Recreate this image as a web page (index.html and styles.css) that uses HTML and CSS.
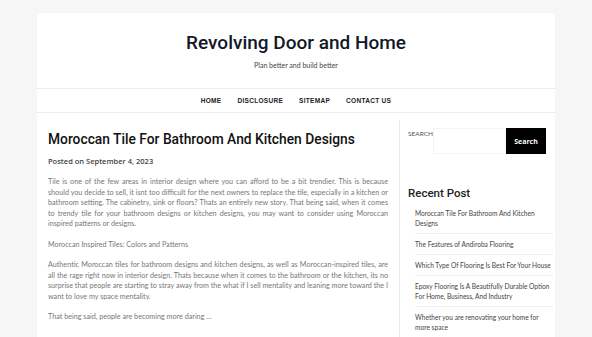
FILE: index.html
```html
<!DOCTYPE html>
<html lang="en">

<head>
  <meta charset="UTF-8">
  <meta name="viewport" content="width=device-width, initial-scale=1.0">
  <title>Revolving Door and Home</title>
  <link rel="stylesheet" href="styles.css">
</head>

<body>
  <div class="site">
    <header class="site-header">
      <h1 class="site-title">Revolving Door and Home</h1>
      <p class="site-tagline">Plan better and build better</p>
    </header>

    <nav class="main-nav">
      <a href="#">Home</a>
      <a href="#">Disclosure</a>
      <a href="#">Sitemap</a>
      <a href="#">Contact Us</a>
    </nav>

    <div class="content">
      <main class="post">
        <h2 class="post-title">Moroccan Tile For Bathroom And Kitchen Designs</h2>
        <div class="post-meta">Posted on September 4, 2023</div>
        <div class="post-body">
          <p>Tile is one of the few areas in interior design where you can afford to be a bit trendier. This is because should you decide to sell, it isnt too difficult for the next owners to replace the tile, especially in a kitchen or bathroom setting. The cabinetry, sink or floors? Thats an entirely new story. That being said, when it comes to trendy tile for your bathroom designs or kitchen designs, you may want to consider using Moroccan inspired patterns or designs.</p>
          <p>Moroccan Inspired Tiles: Colors and Patterns</p>
          <p>Authentic Moroccan tiles for bathroom designs and kitchen designs, as well as Moroccan-inspired tiles, are all the rage right now in interior design. Thats because when it comes to the bathroom or the kitchen, its no surprise that people are starting to stray away from the what if I sell mentality and leaning more toward the I want to love my space mentality.</p>
          <p>That being said, people are becoming more daring &hellip;</p>
        </div>
        <a href="#" class="read-more">Read More</a>
      </main>

      <aside class="sidebar">
        <form class="search-form">
          <label for="s">Search</label>
          <input type="text" id="s">
          <button type="button">Search</button>
        </form>

        <h3 class="widget-title">Recent Post</h3>
        <ul class="recent-posts">
          <li><a href="#">Moroccan Tile For Bathroom And Kitchen Designs</a></li>
          <li><a href="#">The Features of Andiroba Flooring</a></li>
          <li><a href="#">Which Type Of Flooring Is Best For Your House</a></li>
          <li><a href="#">Epoxy Flooring Is A Beautifully Durable Option For Home, Business, And Industry</a></li>
          <li><a href="#">Whether you are renovating your home for more space</a></li>
        </ul>
      </aside>
    </div>
  </div>
</body>

</html>
```

FILE: styles.css
```css
* {
  margin: 0;
  padding: 0;
  box-sizing: border-box;
}

body {
  font-family: 'Lato', sans-serif;
  background: #f6f6f6;
  color: #666;
  height: 337px;
  overflow: hidden;
}

a {
  text-decoration: none;
  color: inherit;
}

.site {
  width: 518px;
  margin: 13px auto 0;
  background: white;
  min-height: 400px;
}

.site-header {
  text-align: center;
  padding: 18px 0 18px;
}

.site-title {
  font-family: 'Roboto', sans-serif;
  font-size: 19px;
  font-weight: 500;
  line-height: 24px;
  color: #111827;
}

.site-tagline {
  font-size: 7px;
  line-height: 10px;
  margin-top: 5px;
  color: #444;
}

.main-nav {
  display: flex;
  justify-content: center;
  gap: 16px;
  border-top: 1px solid #ececec;
  border-bottom: 1px solid #ececec;
  height: 25px;
  align-items: center;
}

.main-nav a {
  font-family: 'Liberation Sans', sans-serif;
  font-size: 6.5px;
  font-weight: bold;
  text-transform: uppercase;
  color: #222;
  letter-spacing: 0.3px;
}

.content {
  display: flex;
  padding-top: 7px;
}

.post {
  flex: none;
  width: 362px;
  padding: 9px 11px 0;
}

.post-title {
  font-family: 'Roboto', sans-serif;
  font-size: 13.8px;
  font-weight: 500;
  line-height: 20px;
  color: #111;
  white-space: nowrap;
}

.post-meta {
  font-family: 'Open Sans', sans-serif;
  font-size: 7.5px;
  font-weight: 600;
  color: #444;
  margin-top: 6px;
  line-height: 12px;
}

.post-body {
  margin-top: 10px;
}

.post-body p {
  font-size: 7.2px;
  line-height: 10.5px;
  text-align: justify;
  margin-bottom: 10px;
  color: #777;
}

.read-more {
  display: inline-block;
  width: 57px;
  height: 20px;
  border: 1px solid #ddd;
  margin-top: 5px;
  font-size: 7px;
  line-height: 18px;
  text-align: center;
  color: #333;
}

.sidebar {
  flex: 1;
  border-left: 1px solid #e8e8e8;
  padding: 8px 9px 0 8px;
}

.search-form {
  display: flex;
  align-items: flex-start;
}

.search-form label {
  font-size: 6.5px;
  text-transform: uppercase;
  color: #555;
  width: 25px;
  line-height: 10px;
  padding-top: 1px;
}

.search-form input {
  width: 73px;
  height: 26px;
  border: 1px solid #f4f4f4;
  background: white;
}

.search-form button {
  width: 40px;
  height: 26px;
  background: #000;
  color: white;
  border: none;
  font-family: 'Open Sans', sans-serif;
  font-size: 7px;
  font-weight: bold;
}

.widget-title {
  font-family: 'Roboto', sans-serif;
  font-size: 11.5px;
  font-weight: 500;
  color: #222;
  margin-top: 31px;
  line-height: 16px;
}

.recent-posts {
  list-style: none;
  margin: 2px 0 0 7px;
  width: 138px;
}

.recent-posts li {
  font-size: 6.6px;
  line-height: 10px;
  padding: 5px 0;
  border-bottom: 1px solid #eee;
  color: #444;
}
```
